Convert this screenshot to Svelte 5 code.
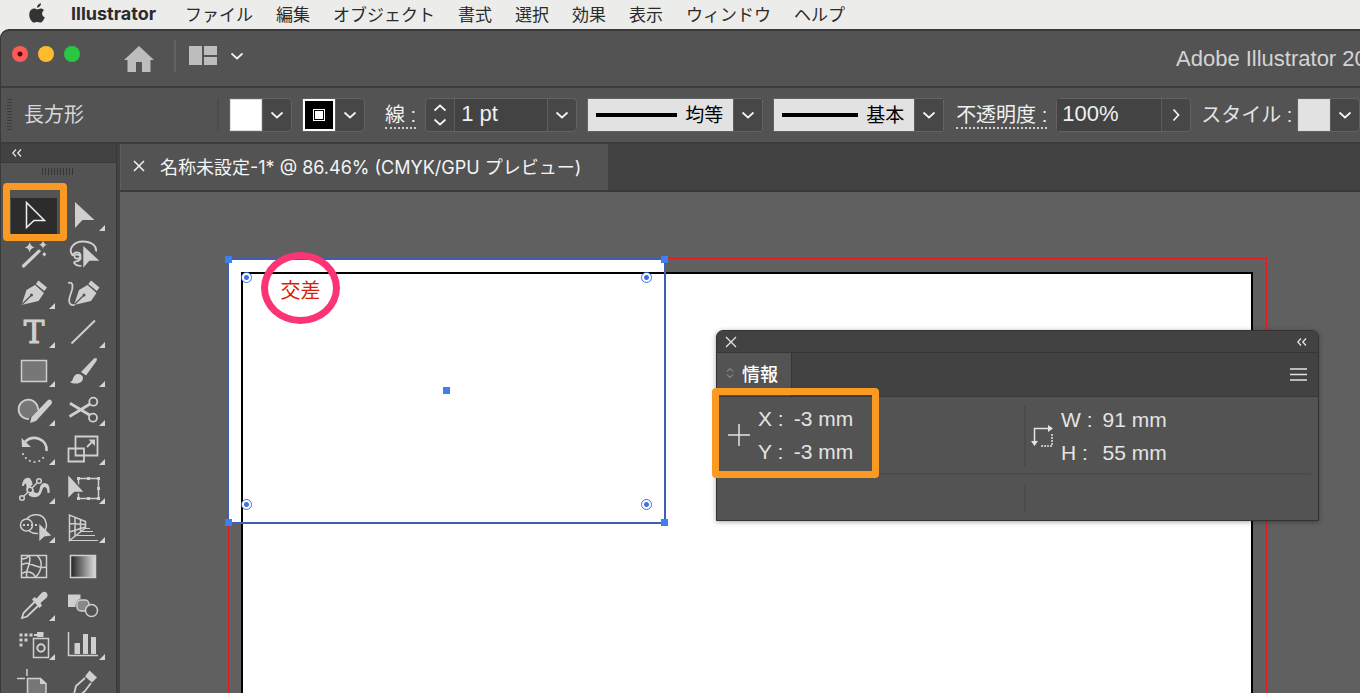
<script lang="ts">
  interface Tool {
    name: string
    icon: string
    flyout?: boolean
  }

  const menus = ['ファイル', '編集', 'オブジェクト', '書式', '選択', '効果', '表示', 'ウィンドウ', 'ヘルプ']

  // every icon is drawn on a 50x39 cell
  const solid = 'fill="currentColor" stroke="none"'
  const shade = 'fill="#777"'

  const tools: Tool[] = [
    { name: '選択', icon: `<path d="M17.500 6.500v25l7.500-7h10.500z"/>` },
    { name: 'ダイレクト選択', flyout: true, icon: `<path ${solid} d="M16 6v26l7.500-8h12z"/>` },
    {
      name: '自動選択',
      icon: `<path stroke-width="3.200" stroke-linecap="round" d="M14.500 31 30 16.200"/><path ${solid} d="M20.700 7q.8 4.500 5 5.300-4.200.8-5 5.300-.8-4.500-5-5.300 4.200-.8 5-5.300zM34 5.500q.7 3.500 4 4.200-3.300.7-4 4.200-.7-3.500-4-4.200 3.300-.7 4-4.200zM35.300 17l2 2.300-2 2.300-2-2.300z"/>`
    },
    {
      name: 'なげなわ',
      icon: `<path stroke-width="1.800" d="M14 21C8 14 15 6.500 24 6.500c8 0 14 4 13 10M14 21c-1-4 7-5 7.500-1s-6 5-6 1.500 7-2 6 2-8 2-6 5 5 2 7 2.500"/><path ${solid} d="M24.300 11v21.700l6-7h10z"/>`
    },
    {
      name: 'ペン',
      flyout: true,
      icon: `<path ${solid} d="m12.500 31 5-15 8.500-5 9 8-5.500 8zM29.500 6.500l8.500 7-2.700 3.600-8.500-7z"/><path stroke="#535353" stroke-width="1.200" d="m13 30.500 9-9"/><circle cx="22.500" cy="21" r="1.500" fill="#535353" stroke="none"/>`
    },
    {
      name: '曲線',
      icon: `<path ${solid} d="m15 31 5-15 8.500-5 9 8-5.500 8zM32 6.500l8.500 7-2.700 3.600-8.500-7z"/><path stroke="#535353" stroke-width="1.200" d="m15.500 30.500 9-9"/><circle cx="25" cy="21" r="1.500" fill="#535353" stroke="none"/><path stroke-width="1.800" d="M9 9c6-2 5 5 3 10s-4 13 3.500 12"/>`
    },
    {
      name: '文字',
      flyout: true,
      icon: `<text x="25" y="30" text-anchor="middle" font-family="DejaVu Serif" font-size="31" stroke-width="1" fill="currentColor">T</text>`
    },
    { name: '直線', flyout: true, icon: `<path stroke-width="2" d="M12.500 30.500 36 7.500"/>` },
    { name: '長方形', flyout: true, icon: `<rect x="12.500" y="8.500" width="25" height="21" ${shade}/>` },
    {
      name: 'ブラシ',
      flyout: true,
      icon: `<path ${solid} d="M22 20 35 6.500q4-2 2.500 2.500L27 23.500zM11 30c4-1 2-5 6-7.500 5-2 9 3 6 6.500-3 3.500-9 3-12 1z"/>`
    },
    {
      name: 'Shaper',
      flyout: true,
      icon: `<path ${shade} stroke-width="1.800" d="M20 28a9.700 9.700 0 1 1 9-9"/><path ${solid} d="m21 32 1.500-6L39 9q2-1 3.300.4 1.400 1.600.2 3.600L27 30z"/>`
    },
    {
      name: 'はさみ',
      flyout: true,
      icon: `<circle cx="34.300" cy="10.700" r="4" stroke-width="1.800"/><circle cx="34" cy="26.700" r="4" stroke-width="1.800"/><path stroke-width="2.800" d="m11 12.300 20 12M10.500 25.500 31 13"/>`
    },
    {
      name: '回転',
      flyout: true,
      icon: `<path stroke-width="2.600" d="M16 12c8-8 23-3 21.500 9"/><path ${solid} d="m12.500 8 .5 9h9z"/><path stroke-width="2" stroke-linecap="round" stroke-dasharray=".1 4.800" d="M14 24c5 10 17 11 22 1"/>`
    },
    {
      name: '拡大・縮小',
      flyout: true,
      icon: `<path stroke-width="1.800" d="M16.500 6.500h22v19h-22zM9.500 18.500H25v13H9.500z"/><path stroke-width="1.800" d="m28 17 6-6"/><path ${solid} d="M29.500 9.500H36V16z"/>`
    },
    {
      name: '線幅',
      flyout: true,
      icon: `<path ${solid} d="M13 17c0-8 8-12 10-4 2 6 0 11 5 11 4 0 1-9 7-10 5 0 6 4 5.500 10h-2c0-4-1-6-3-6-3 0-2 9-8 10-8 1-11-4-10-10 0-5-2-4-2.500-1z"/><path d="m13 29 17-17" stroke="#535353" stroke-width="4"/><path d="m14 28 15-15"/><g fill="#535353"><circle cx="13" cy="29" r="2.300"/><circle cx="30" cy="12" r="2.300"/><circle cx="21" cy="21" r="2.800"/></g>`
    },
    {
      name: '自由変形',
      flyout: true,
      icon: `<path d="M19.500 9.500h20v20h-20z"/><path ${solid} d="M18 8h3v3h-3zM28 8h3v3h-3zM38 8h3v3h-3zM38 18h3v3h-3zM38 28h3v3h-3zM28 28h3v3h-3zM18 28h3v3h-3z"/><path fill="currentColor" stroke="#535353" d="M8.500 4.500v26l7-7H26z"/>`
    },
    {
      name: 'シェイプ形成',
      flyout: true,
      icon: `<circle cx="17.500" cy="17" r="6"/><path d="M18 11c4-6 16-6 18.500 2 1.500 4 1 8-1.500 10M20 23q4 3 9 2.500"/><path stroke-width="1.800" stroke-dasharray="2 2" d="M14 17h15"/><path ${solid} d="M30.300 16v17l5-4.500 7-1z"/>`
    },
    {
      name: '遠近グリッド',
      flyout: true,
      icon: `<path d="M10.500 7v25.500l16-12.500v-6.500zM16 9.500v19M21.500 11.500v12.500M10.500 15.500l16 1M10.500 24l16-5"/><path stroke-width="1" d="M25 20.500h6M22 23.500h12M18 27.500h18M11 32.500h28"/>`
    },
    {
      name: 'メッシュ',
      icon: `<path d="M12.500 8.500h25v22h-25zM12.500 18c8-6 13 5 25 2M12.500 27c7-5 13 0 14 3.500M20 8.500c4 8-5 14-2 22M28 8.500c8 7 3 18-2 22M12.500 12c3 0 6-1 7-3.500"/>`
    },
    {
      name: 'グラデーション',
      icon: `<defs><linearGradient id="ramp"><stop stop-color="#222"/><stop offset="1" stop-color="#ddd"/></linearGradient></defs><path fill="url(#ramp)" d="M11.500 8.500h25v22h-25z"/>`
    },
    {
      name: 'スポイト',
      flyout: true,
      icon: `<path stroke-width="1.800" d="M26 15.500 14.500 27l-1.500 5 5-1.500L30 19"/><path ${solid} d="m23 13.500 2.500-2.500 2 1.500 5-5.500q3.500-2.500 5.500.3 1.500 3-1 5L31.500 17l1.500 2.500-2.500 2.500z"/>`
    },
    {
      name: 'ブレンド',
      icon: `<path ${solid} d="M9 8.500h12.500v4q-5 2-5 8.500H9z"/><rect x="18" y="14" width="12" height="11" rx="4" fill="#888"/><circle cx="32.500" cy="24.500" r="6" fill="#535353"/>`
    },
    {
      name: 'シンボルスプレー',
      flyout: true,
      icon: `<path ${solid} d="M10.500 8.500h3v3h-3zM15.500 8.500h3v3h-3zM20.500 8.500h3v3h-3zM10.500 13.500h3v3h-3zM15.500 13.500h3v3h-3zM10.500 18.500h3v3h-3zM28 7h6.500v5H28zM25 9h4v2h-4z"/><path d="M24.500 13.500h15v19h-15z"/><circle cx="32" cy="23" r="3.700" stroke-width="2"/>`
    },
    {
      name: '棒グラフ',
      flyout: true,
      icon: `<path d="M9.500 7v23.500H39"/><path ${solid} d="M15.500 18h5.500v11h-5.500zM24 9h5v20h-5zM32 12h5v17h-5z"/>`
    },
    {
      name: 'アートボード',
      icon: `<path d="M8 14.500h8M18 5v7"/><path ${shade} d="M18.500 14.500h13l5.500 5v19H18.500z"/><path ${solid} d="M31 14v6h6z"/>`
    },
    {
      name: 'スライス',
      icon: `<path ${solid} d="m26 12.500 4.500-6 7.500 7-5 5z"/><path stroke-width="1.800" d="m26 14-9 8-4 16L26 27l6-8"/>`
    }
  ]

  const anchors = ['tl', 'tr', 'bl', 'br']

  let activeTool = $state('選択')
  let strokeWeight = $state('1 pt')
  let opacity = $state('100%')
</script>

{#snippet chevron(direction: string)}
  <svg class="chevron {direction}" viewBox="0 0 14 8" aria-hidden="true"><path d="M1.500 1.500 7 6.500l5.500-5" /></svg>
{/snippet}

{#snippet collapse()}
  <svg class="collapse" viewBox="0 0 10 8" aria-hidden="true"><path d="M4 .5.800 4 4 7.500M9 .5 5.800 4 9 7.500" /></svg>
{/snippet}

<div class="screen">
  <nav class="menubar">
    <svg class="apple" viewBox="0 0 18 21" aria-hidden="true">
      <path d="M12.500.3c.2 2-1.800 4.500-4 4.400C8.300 2.700 10.300.6 12.500.3zM15.400 7.200c-2.700 1.900-2.300 5.700.9 7-.8 2.400-2.600 5.400-4.500 5.400-1.100 0-1.600-.7-3-.7s-2 .7-3 .7C3 19.600.4 14.700.8 11c.3-3.400 2.500-5.500 4.900-5.500 1.300 0 2.300.8 3.200.8.900 0 2.100-.9 3.700-.8 1.200.1 2.200.6 2.800 1.700z" />
    </svg>
    <button class="app-name">Illustrator</button>
    {#each menus as menu}
      <button>{menu}</button>
    {/each}
  </nav>

  <div class="window">
    <header class="titlebar">
      <div class="lights">
        <button class="light close" aria-label="閉じる"></button>
        <button class="light minimize" aria-label="しまう"></button>
        <button class="light zoom" aria-label="拡大"></button>
      </div>
      <button class="home" aria-label="ホーム">
        <svg viewBox="0 0 30 26"><path d="M15 0 30 14h-3.500v12H18V16h-6v10H3.500V14H0z" /></svg>
      </button>
      <button class="arrange" aria-label="ドキュメントレイアウト">
        <svg viewBox="0 0 28 19"><path d="M0 0h13v19H0zM15 0h13v9H15zM15 11h13v8H15z" /></svg>
        {@render chevron('down')}
      </button>
      <h1>Adobe Illustrator 2020</h1>
    </header>

    <div class="control-bar">
      <span class="grip"></span>
      <span class="object-type">長方形</span>

      <button class="combo swatch-combo" aria-label="塗り">
        <span class="swatch fill"></span>
        <span class="arrow">{@render chevron('down')}</span>
      </button>
      <button class="combo swatch-combo" aria-label="線のカラー">
        <span class="swatch stroke"><i></i></span>
        <span class="arrow">{@render chevron('down')}</span>
      </button>

      <label class="linked" for="weight">線 :</label>
      <div class="combo weight">
        <div class="stepper">
          <button aria-label="増やす">{@render chevron('up')}</button>
          <button aria-label="減らす">{@render chevron('down')}</button>
        </div>
        <input id="weight" type="text" bind:value={strokeWeight} />
        <button class="arrow" aria-label="線幅の一覧">{@render chevron('down')}</button>
      </div>

      <label class="combo profile">
        <span class="line"></span>
        <select aria-label="可変線幅プロファイル"><option>均等</option></select>
        <span class="arrow">{@render chevron('down')}</span>
      </label>
      <label class="combo profile brush">
        <span class="line"></span>
        <select aria-label="ブラシ定義"><option>基本</option></select>
        <span class="arrow">{@render chevron('down')}</span>
      </label>

      <label class="linked" for="opacity">不透明度 :</label>
      <div class="combo opacity">
        <input id="opacity" type="text" bind:value={opacity} />
        <button class="arrow" aria-label="不透明度スライダー">{@render chevron('right')}</button>
      </div>

      <span class="style-label" id="style-label">スタイル :</span>
      <button class="combo swatch-combo" aria-labelledby="style-label">
        <span class="swatch style"></span>
        <span class="arrow">{@render chevron('down')}</span>
      </button>
    </div>

    <div class="workspace">
      <aside class="tools">
        <button class="tools-head" aria-label="パネルを折りたたむ">{@render collapse()}</button>
        <div class="tools-grip"></div>
        <div class="tool-grid">
          {#each tools as tool}
            <button
              class="tool"
              class:active={tool.name === activeTool}
              aria-label={tool.name}
              onclick={() => (activeTool = tool.name)}
            >
              <svg viewBox="0 0 50 39">
                {@html tool.icon}
                {#if tool.flyout}
                  <path class="flyout" d="M46 29v6h-6z" />
                {/if}
              </svg>
            </button>
          {/each}
          <span class="highlight tool-highlight"></span>
        </div>
      </aside>

      <main class="document">
        <div class="tabs">
          <div class="tab">
            <button aria-label="タブを閉じる">
              <svg viewBox="0 0 12 12"><path d="m1 1 10 10M11 1 1 11" /></svg>
            </button>
            <span>名称未設定-1* @ 86.46% (CMYK/GPU プレビュー)</span>
          </div>
        </div>

        <div class="canvas">
          <div class="bleed"></div>
          <div class="artboard"></div>
          <div class="selection">
            <div class="trim"></div>
            {#each anchors as anchor}
              <span class="handle {anchor}"></span>
              <span class="corner {anchor}"></span>
            {/each}
            <span class="center"></span>
            <span class="snap">交差</span>
          </div>

          <section class="info">
            <div class="info-head">
              <button aria-label="パネルを閉じる">
                <svg class="close-icon" viewBox="0 0 12 12"><path d="m1 1 10 10M11 1 1 11" /></svg>
              </button>
              <button aria-label="アイコンパネル化">{@render collapse()}</button>
            </div>
            <div class="info-tabs">
              <button class="info-tab">
                <svg viewBox="0 0 8 12"><path d="M1 4.500 4 1.500l3 3M1 7.500l3 3 3-3" /></svg>
                情報
              </button>
              <button class="panel-menu" aria-label="パネルメニュー">
                <svg viewBox="0 0 17 13"><path d="M0 1h17M0 6.500h17M0 12h17" /></svg>
              </button>
            </div>
            <div class="readouts">
              <div class="readout">
                <svg class="cross" viewBox="0 0 22 22"><path d="M11 0v22M0 11h22" /></svg>
                <dl>
                  <dt>X :</dt><dd>-3 mm</dd>
                  <dt>Y :</dt><dd>-3 mm</dd>
                </dl>
              </div>
              <div class="readout size">
                <svg class="extent" viewBox="0 0 22 22">
                  <path d="M3.500 17V3.500H18" />
                  <path class="tip" d="M17 0v7l5-3.500zM0 16h7l-3.500 5z" />
                  <path class="dots" d="M21 9v12H9" />
                </svg>
                <dl>
                  <dt>W :</dt><dd>91 mm</dd>
                  <dt>H :</dt><dd>55 mm</dd>
                </dl>
              </div>
            </div>
            <div class="info-foot"><span></span></div>
            <span class="highlight info-highlight"></span>
          </section>
        </div>
      </main>
    </div>
  </div>
</div>

<style>
  :global(body) {
    background: #ececea;
  }

  .screen {
    display: flex;
    flex-direction: column;
    height: 100vh;
    overflow: hidden;
    font-family: 'Liberation Sans', 'Noto Sans CJK JP', sans-serif;
    font-size: 20px;
    color: #e4e4e4;
  }

  .screen * {
    box-sizing: border-box;
  }

  button {
    display: flex;
    align-items: center;
    justify-content: center;
    flex-shrink: 0;
    padding: 0;
    border: none;
    background: none;
    color: inherit;
    font: inherit;
    white-space: nowrap;
  }

  svg {
    display: block;
    flex-shrink: 0;
    fill: none;
    stroke: currentColor;
  }

  .chevron {
    width: 14px;
    height: 8px;
    color: #f4f4f4;
    stroke-width: 1.7;
  }

  .chevron.up {
    transform: rotate(180deg);
  }

  .chevron.right {
    transform: rotate(-90deg);
  }

  .collapse {
    width: 10px;
    height: 8px;
    stroke-width: 1.3;
  }

  /* menu bar */
  .menubar {
    display: flex;
    align-items: center;
    gap: 23px;
    height: 29px;
    flex-shrink: 0;
    padding: 0 0 2px 27px;
    background: #ececea;
    color: #2b2b2b;
    font-family: Inter, 'Noto Sans CJK JP', sans-serif;
    font-size: 17px;
  }

  .apple {
    width: 21px;
    height: 21px;
    fill: #333;
    stroke: none;
  }

  .app-name {
    justify-content: flex-start;
    width: 91px;
    font-size: 18px;
    font-weight: 700;
  }

  /* application frame */
  .window {
    display: flex;
    flex-direction: column;
    flex: 1;
    min-height: 0;
    border-top: 2px solid #3a3a3a;
    border-left: 1px solid #3a3a3a;
    border-top-left-radius: 9px;
    background: #535353;
    overflow: hidden;
  }

  .titlebar {
    display: flex;
    align-items: center;
    height: 57px;
    flex-shrink: 0;
    padding: 0 0 4px 11px;
    border-bottom: 2px solid #3c3c3c;
  }

  .lights {
    display: flex;
    gap: 10px;
    margin-bottom: 6px;
  }

  .light {
    width: 16px;
    height: 16px;
    border-radius: 50%;
  }

  .close {
    background: radial-gradient(circle, #5c0504 2px, #fc5b57 3px);
  }

  .minimize {
    background: #fdbc2e;
  }

  .zoom {
    background: #28c840;
  }

  .home {
    margin: 4px 20px 0 44px;
  }

  .home svg {
    width: 30px;
    height: 26px;
  }

  .home svg,
  .arrange svg:first-child {
    fill: #bdbdbd;
    stroke: none;
  }

  .arrange {
    gap: 13px;
    height: 32px;
    margin-bottom: 2px;
    padding-left: 13px;
    border-left: 2px solid #626262;
  }

  .arrange svg:first-child {
    width: 28px;
    height: 19px;
  }

  h1 {
    width: 184px;
    margin: 4px 0 0 auto;
    overflow: hidden;
    font-size: 22px;
    font-weight: 400;
    white-space: nowrap;
    color: #d4d4d4;
  }

  /* control bar */
  .control-bar {
    display: flex;
    align-items: center;
    height: 56px;
    flex-shrink: 0;
    padding-left: 6px;
    border-bottom: 2px solid #3c3c3c;
    white-space: nowrap;
  }

  .grip {
    width: 5px;
    height: 32px;
    flex-shrink: 0;
    background: repeating-linear-gradient(#3c3c3c 0 1px, #535353 1px 3px);
  }

  .object-type {
    width: 195px;
    height: 32px;
    flex-shrink: 0;
    margin: 0 10px 0 12px;
    border-right: 2px solid #4b4b4b;
    line-height: 32px;
    color: #d8d8d8;
  }

  .combo {
    display: flex;
    align-items: stretch;
    flex-shrink: 0;
    height: 34px;
    margin-right: 10px;
    border: 1px solid #626262;
    border-radius: 4px;
    background: #474747;
  }

  .combo:last-child {
    margin-right: 0;
  }

  .swatch-combo,
  .profile {
    border-radius: 0 4px 4px 0;
  }

  .arrow {
    display: flex;
    align-items: center;
    justify-content: center;
    width: 29px;
    border-left: 1px solid #5e5e5e;
  }

  .swatch {
    width: 32px;
    border: 1px solid #dcdcdc;
  }

  .fill {
    background: #fff;
  }

  .stroke {
    display: flex;
    align-items: center;
    justify-content: center;
    border: 2px solid #fff;
    background: #000;
  }

  .stroke i {
    width: 12px;
    height: 12px;
    border: 1px solid #fff;
    background: #fff;
    box-shadow: inset 0 0 0 1px #000;
  }

  .style {
    background: #e2e2e2;
  }

  .linked {
    flex-shrink: 0;
    margin: 3px 9px 0 0;
    border-bottom: 2px dotted #d0d0d0;
    line-height: 23px;
    color: #f0f0f0;
  }

  .swatch-combo + .linked {
    margin-left: 10px;
  }

  .stepper {
    display: flex;
    flex-direction: column;
    justify-content: space-evenly;
    width: 29px;
    align-items: center;
    border-right: 1px solid #5e5e5e;
  }

  input {
    width: 92px;
    padding: 0 6px 2px;
    border: none;
    background: #434343;
    color: #f0f0f0;
    font: inherit;
    font-size: 22px;
  }

  .opacity input {
    width: 104px;
    padding-left: 5px;
  }

  .profile {
    align-items: center;
    width: 176px;
    background: #e2e2e2;
    color: #000;
  }

  .brush {
    width: 171px;
    margin-right: 12px;
  }

  .profile .line {
    flex: 1;
    height: 4px;
    margin: 0 8px;
    background: #000;
  }

  .profile select {
    width: 48px;
    padding: 0;
    border: none;
    appearance: none;
    background: none;
    color: #000;
    font: inherit;
    font-size: 19px;
  }

  .profile .arrow {
    height: 32px;
    background: #474747;
  }

  .style-label {
    width: 96px;
    flex-shrink: 0;
    padding-bottom: 3px;
  }

  /* workspace */
  .workspace {
    display: flex;
    flex: 1;
    min-height: 0;
    background: #424242;
  }

  .tools {
    width: 116px;
    flex-shrink: 0;
    margin-right: 3px;
    border-right: 1px solid #3a3a3a;
    background: #535353;
  }

  .tools-head {
    justify-content: flex-start;
    width: 100%;
    height: 19px;
    padding-left: 11px;
    border-bottom: 1px solid #393939;
    background: #424242;
  }

  .tools-grip {
    width: 32px;
    height: 7px;
    margin: 5px 0 21px 41px;
    background: repeating-linear-gradient(90deg, #363636 0 1px, #535353 1px 3px);
  }

  .tool-grid {
    position: relative;
    display: grid;
    grid-template-columns: 50px 50px;
    padding-left: 8px;
    color: #cfcfcf;
  }

  .tool {
    height: 39px;
  }

  .tool svg {
    width: 50px;
    height: 39px;
    stroke-width: 1.5;
  }

  .tool.active {
    background: linear-gradient(#2c2c2c, #2c2c2c) center / 46px 36px no-repeat;
    color: #f0f0f0;
  }

  .flyout {
    fill: #d6d6d6;
    stroke: none;
  }

  .highlight {
    position: absolute;
    border: 7px solid #fb9a23;
    border-radius: 4px;
    pointer-events: none;
  }

  .tool-highlight {
    left: 2px;
    top: -13px;
    width: 64px;
    height: 58px;
  }

  .document {
    display: flex;
    flex-direction: column;
    flex: 1;
    min-width: 0;
  }

  .tabs {
    display: flex;
    height: 48px;
    flex-shrink: 0;
    border-bottom: 2px solid #3a3a3a;
  }

  .tab {
    display: flex;
    align-items: center;
    gap: 15px;
    padding: 0 27px 2px 12px;
    border-left: 1px solid #5e5e5e;
    background: #535353;
    color: #f4f4f4;
    font-family: Inter, 'Noto Sans CJK JP', sans-serif;
    font-size: 18px;
    white-space: nowrap;
  }

  .tab svg {
    width: 12px;
    height: 12px;
    stroke-width: 1.5;
  }

  .canvas {
    position: relative;
    flex: 1;
    overflow: hidden;
    background: #606060;
  }

  .bleed {
    position: absolute;
    inset: 66px 93px -20px 108px;
    border: 1px solid #e01a1a;
  }

  .artboard {
    position: absolute;
    inset: 80px 107px -20px 121px;
    border: 2px solid #000;
    background: #fff;
  }

  .selection {
    position: absolute;
    left: 107px;
    top: 66px;
    width: 439px;
    height: 266px;
    border: 2px solid #3f5fb4;
    background: #fff;
  }

  .trim {
    position: absolute;
    inset: 12px 0 0 12px;
    border: solid #000;
    border-width: 2px 0 0 2px;
  }

  .handle,
  .center {
    position: absolute;
    width: 7px;
    height: 7px;
    background: #3f7ff0;
  }

  .center {
    left: calc(50% - 4px);
    top: calc(50% - 4px);
  }

  .corner {
    position: absolute;
    width: 11px;
    height: 11px;
    border: 1px solid #3f73dc;
    border-radius: 50%;
    background: radial-gradient(circle, #3f73dc 2px, #fff 3px);
  }

  .handle.tl { left: -4px; top: -4px; }
  .handle.tr { right: -4px; top: -4px; }
  .handle.bl { left: -4px; bottom: -4px; }
  .handle.br { right: -4px; bottom: -4px; }
  .corner.tl { left: 12px; top: 12px; }
  .corner.tr { right: 12px; top: 12px; }
  .corner.bl { left: 12px; bottom: 12px; }
  .corner.br { right: 12px; bottom: 12px; }

  .snap {
    position: absolute;
    left: 32px;
    top: -8px;
    width: 79px;
    height: 72px;
    border: 7px solid #fb3573;
    border-radius: 50%;
    line-height: 64px;
    text-align: center;
    color: #d81e06;
  }

  /* info panel */
  .info {
    position: absolute;
    left: 596px;
    top: 138px;
    width: 603px;
    border: 1px solid #333;
    border-radius: 7px 7px 0 0;
    background: #535353;
    box-shadow: 0 1px 5px rgb(0 0 0 / 35%);
  }

  .info-head {
    display: flex;
    align-items: center;
    justify-content: space-between;
    height: 22px;
    padding: 0 11px 0 8px;
    border-bottom: 1px solid #363636;
    border-radius: 6px 6px 0 0;
    background: #424242;
  }

  .close-icon {
    width: 12px;
    height: 12px;
    stroke-width: 1.3;
  }

  .info-tabs {
    display: flex;
    align-items: stretch;
    justify-content: space-between;
    height: 44px;
    padding-right: 11px;
    border-bottom: 1px solid #393939;
    background: #424242;
  }

  .info-tab {
    gap: 8px;
    padding: 0 13px 4px 9px;
    border-right: 1px solid #363636;
    background: #535353;
    color: #fff;
    font-size: 18px;
    font-weight: 500;
  }

  .info-tab svg {
    width: 8px;
    height: 12px;
    color: #a8a8a8;
  }

  .panel-menu svg {
    width: 17px;
    height: 13px;
    stroke-width: 1.5;
  }

  .readouts {
    display: grid;
    grid-template-columns: 307px 1fr;
    height: 78px;
    margin-right: 7px;
    border-bottom: 2px solid #4b4b4b;
  }

  .readout {
    display: flex;
    align-items: center;
    gap: 8px;
    padding-left: 11px;
  }

  .readout.size {
    height: 60px;
    margin-top: 9px;
    padding-left: 5px;
    border-left: 2px solid #4b4b4b;
  }

  .cross {
    width: 22px;
    height: 22px;
    stroke-width: 1.5;
  }

  .extent {
    width: 22px;
    height: 22px;
    stroke-width: 1.5;
  }

  .extent .tip {
    fill: currentColor;
    stroke: none;
  }

  .extent .dots {
    stroke-dasharray: 2 1;
  }

  dl {
    display: grid;
    grid-template-columns: auto auto;
    column-gap: 10px;
    margin: 0;
    font-size: 21px;
    line-height: 33px;
    white-space: nowrap;
  }

  dd {
    margin: 0;
  }

  .info-foot {
    display: flex;
    height: 45px;
    padding: 9px 0 9px 307px;
  }

  .info-foot span {
    border-left: 2px solid #4b4b4b;
  }

  .info-highlight {
    left: -5px;
    top: 57px;
    width: 167px;
    height: 90px;
  }
</style>
